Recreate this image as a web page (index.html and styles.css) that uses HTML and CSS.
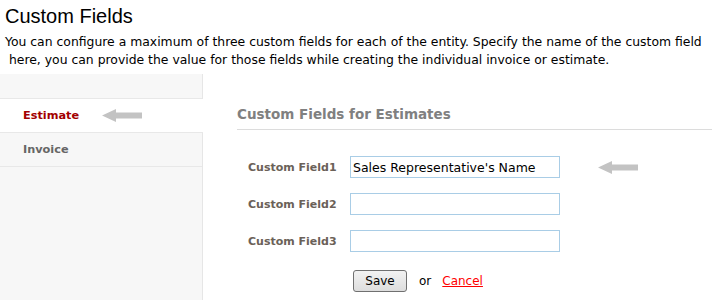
FILE: index.html
```html
<!DOCTYPE html>
<html lang="en">
<head>
  <meta charset="UTF-8">
  <meta name="viewport" content="width=device-width, initial-scale=1.0">
  <title>Custom Fields</title>
  <link rel="stylesheet" href="styles.css">
</head>
<body>
  <!-- 页面标题 -->
  <div class="header">
    <h1 class="title">Custom Fields</h1>
    <p class="intro">You can configure a maximum of three custom fields for each of the entity. Specify the name of the custom field<br>&nbsp;here, you can provide the value for those fields while creating the individual invoice or estimate.</p>
  </div>

  <div class="main">
    <!-- 左侧菜单 -->
    <ul class="menu">
      <li class="menu-top"></li>
      <li class="item active">Estimate
        <svg class="arrow" width="40" height="13" viewBox="0 0 40 13"><polygon points="0,6.5 14,0 14,3.5 40,3.5 40,9.5 14,9.5 14,13" fill="#c3c3c3"/></svg>
      </li>
      <li class="item">Invoice</li>
    </ul>

    <!-- 右侧表单 -->
    <div class="content">
      <h2 class="heading">Custom Fields for Estimates</h2>
      <div class="form">
        <div class="row">
          <label class="label">Custom Field1</label>
          <input class="field" type="text" value="Sales Representative's Name">
          <svg class="arrow arrow-field" width="40" height="13" viewBox="0 0 40 13"><polygon points="0,6.5 14,0 14,3.5 40,3.5 40,9.5 14,9.5 14,13" fill="#c3c3c3"/></svg>
        </div>
        <div class="row">
          <label class="label">Custom Field2</label>
          <input class="field" type="text">
        </div>
        <div class="row">
          <label class="label">Custom Field3</label>
          <input class="field" type="text">
        </div>
        <div class="actions">
          <button class="save">Save</button>
          <span class="or">or</span>
          <a class="cancel" href="#">Cancel</a>
        </div>
      </div>
    </div>
  </div>
</body>
</html>
```

FILE: styles.css
```css
* {
  padding: 0;
  margin: 0;
  list-style: none;
  box-sizing: border-box;
}

body {
  font-family: "DejaVu Sans", Verdana, sans-serif;
  font-size: 12px;
  color: #000;
  background-color: #fff;
  overflow: hidden;
}

.header {
  padding: 4px 0 0 5px;
}

.title {
  font-family: "Liberation Sans", Arial, sans-serif;
  font-size: 20px;
  font-weight: normal;
  line-height: 24px;
}

.intro {
  margin-top: 5px;
  font-size: 12.4px;
  line-height: 18px;
}

.main {
  display: flex;
  margin-top: 5px;
  height: 240px;
}

.menu {
  width: 203px;
  flex-shrink: 0;
  background-color: #f7f7f7;
  border-right: 1px solid #e6e6e6;
}

.menu-top {
  height: 25px;
  border-bottom: 1px solid #e8e8e8;
}

.item {
  display: flex;
  align-items: center;
  height: 34px;
  padding-left: 23px;
  border-bottom: 1px solid #e8e8e8;
  font-size: 11.3px;
  font-weight: bold;
  color: #666;
}

.item.active {
  color: #a30000;
  background-color: #fff;
  margin-right: -1px;
}

.arrow {
  display: block;
}

.item .arrow {
  margin-left: 23px;
}

.content {
  flex: 1;
  padding-top: 24px;
}

.heading {
  margin: 0 0 0 34px;
  padding-top: 8px;
  height: 32px;
  border-bottom: 1px solid #dcdcdc;
  font-size: 13.5px;
  color: #808080;
}

.form {
  padding: 26px 0 0 45px;
}

.row {
  display: flex;
  align-items: center;
  height: 22px;
  margin-bottom: 15px;
}

.label {
  width: 102px;
  font-size: 11px;
  font-weight: bold;
  color: #6b6158;
}

.field {
  width: 210px;
  height: 22px;
  padding: 0 2px;
  border: 1px solid #a9cde6;
  font-family: "DejaVu Sans", Verdana, sans-serif;
  font-size: 12.5px;
  color: #000;
  outline: none;
}

.arrow-field {
  margin-left: 38px;
}

.actions {
  display: flex;
  align-items: center;
  padding: 3px 0 0 105px;
}

.save {
  width: 54px;
  height: 22px;
  border: 1px solid #707070;
  border-radius: 3px;
  background: linear-gradient(#f2f2f2, #dddddd);
  font-family: "DejaVu Sans", Verdana, sans-serif;
  font-size: 12px;
  color: #000;
}

.or {
  margin-left: 12px;
  font-size: 12px;
}

.cancel {
  margin-left: 11px;
  font-size: 12px;
  color: #f00;
}
```
